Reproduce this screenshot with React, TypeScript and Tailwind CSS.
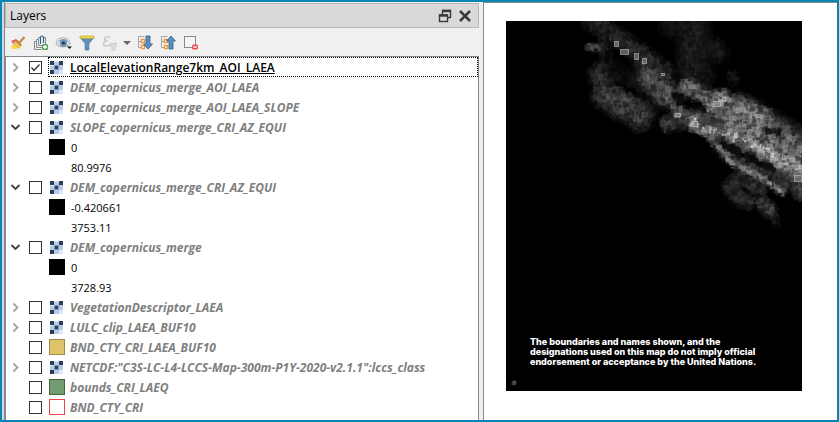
import { useState, type ReactNode } from "react";

type Layer = {
  name: string;
  kind: "raster" | "yellow" | "green" | "outline";
  branch?: "open" | "closed";
  active?: boolean;
  legend?: [string, string];
};

const layers: Layer[] = [
  { name: "LocalElevationRange7km_AOI_LAEA", kind: "raster", branch: "closed", active: true },
  { name: "DEM_copernicus_merge_AOI_LAEA", kind: "raster", branch: "closed" },
  { name: "DEM_copernicus_merge_AOI_LAEA_SLOPE", kind: "raster", branch: "closed" },
  { name: "SLOPE_copernicus_merge_CRI_AZ_EQUI", kind: "raster", branch: "open", legend: ["0", "80.9976"] },
  { name: "DEM_copernicus_merge_CRI_AZ_EQUI", kind: "raster", branch: "open", legend: ["-0.420661", "3753.11"] },
  { name: "DEM_copernicus_merge", kind: "raster", branch: "open", legend: ["0", "3728.93"] },
  { name: "VegetationDescriptor_LAEA", kind: "raster", branch: "closed" },
  { name: "LULC_clip_LAEA_BUF10", kind: "raster", branch: "closed" },
  { name: "BND_CTY_CRI_LAEA_BUF10", kind: "yellow" },
  { name: 'NETCDF:"C3S-LC-L4-LCCS-Map-300m-P1Y-2020-v2.1.1":lccs_class', kind: "raster", branch: "closed" },
  { name: "bounds_CRI_LAEQ", kind: "green" },
  { name: "BND_CTY_CRI", kind: "outline" },
];

/* ---------- toolbar icons ---------- */

function BrushIcon() {
  return (
    <svg width="16" height="16" viewBox="0 0 16 16">
      <path d="M1 6l5-2 3 3-4 3z" fill="#f0584a" />
      <path d="M2 8l4-2 4 4-4 2z" fill="#6aa2dc" />
      <path d="M1 11l5-2 3 3-3 2-4 0z" fill="#f7d64a" />
      <path d="M6 6l5 5-2 3-6-5z" fill="#f4c04c" />
      <path d="M7 5l5 5-1.500 1L6 6z" fill="#b5722c" />
      <path d="M9.500 7.500L14.500 2" stroke="#c98a45" strokeWidth="2.200" />
    </svg>
  );
}

function AddGroupIcon() {
  return (
    <svg width="16" height="16" viewBox="0 0 16 16" fill="none">
      <path d="M3.500 6.500h-2v8h7M5.500 4.500h-2v8h6M7 2.500H5.500v8h7v-8H11" stroke="#858b90" />
      <path d="M7.500 9V2.500a1.500 1.500 0 0 1 3 0V8" stroke="#33658f" strokeWidth="1.200" />
      <rect x="9" y="9" width="6" height="6" rx="1.500" fill="#5e9c62" />
      <path d="M12 10v4M10 12h4" stroke="#fff" strokeWidth="1.300" />
    </svg>
  );
}

function EyeIcon() {
  return (
    <svg width="18" height="16" viewBox="0 0 18 16">
      <path d="M1 8.500C4 3.500 12 3 15.500 8.500 12 13 4 13 1 8.500z" fill="#e4e8ec" stroke="#9ba1a6" />
      <path d="M1 6C4 1.800 11.500 1.500 15 6" fill="none" stroke="#b1b5b8" />
      <circle cx="8.500" cy="8" r="3.800" fill="#6d94bf" />
      <circle cx="8.500" cy="8" r="1.600" fill="#24364d" />
      <path d="M12 11.500h5L14.500 14z" fill="#111" />
    </svg>
  );
}

function FilterIcon() {
  return (
    <svg width="16" height="16" viewBox="0 0 16 16">
      <path d="M1 2.500h14L9.800 8.500V15H6.200V8.500z" fill="#6391be" stroke="#48749f" strokeWidth=".8" />
      <rect x="1" y="1" width="14" height="2.500" rx=".8" fill="#f5dc4b" stroke="#b69b2f" strokeWidth=".6" />
    </svg>
  );
}

function ExpressionFilterIcon() {
  return (
    <svg width="16" height="16" viewBox="0 0 16 16" fill="none">
      <path d="M8 2.500C5 .8 2 2 2.500 4.200c.2 1.300 1.500 1.700 3 1.700C3 6 1.200 7 1.500 9c.4 2.200 4 2.700 6.500 1" stroke="#c5c5c5" strokeWidth="1.400" />
      <path d="M8 8.500h6.500v2L13 12v3h-3v-3l-2-1.500z" fill="#dedede" stroke="#c9c9c9" />
    </svg>
  );
}

function TreeArrowIcon({ up = false }: { up?: boolean }) {
  return (
    <svg width="16" height="16" viewBox="0 0 16 16" fill="none">
      <path d="M1.500 1v11.500h3M1.500 6.500h3M1.500 1.500h6" stroke="#a5a5a5" />
      <rect x="4.500" y="4.500" width="3" height="3" fill="#fff" stroke="#ee9838" strokeWidth="1.400" />
      <rect x="4.500" y="10.500" width="3" height="3" fill="#fff" stroke="#ee9838" strokeWidth="1.400" />
      {up ? (
        <path d="M11 1L15.500 6H13v8H9V6H6.500z" fill="#5c8fc1" stroke="#315f8d" strokeWidth=".8" />
      ) : (
        <path d="M11 14L6.500 9H9V1h4v8h2.500z" fill="#5c8fc1" stroke="#315f8d" strokeWidth=".8" />
      )}
    </svg>
  );
}

function RemoveIcon() {
  return (
    <svg width="16" height="16" viewBox="0 0 16 16" fill="none">
      <rect x="1.500" y="1.500" width="11" height="11" stroke="#85898c" fill="#f4f4f4" />
      <rect x="9" y="9.500" width="6" height="5" rx="1.500" fill="#e84e56" />
      <path d="M10 12h4" stroke="#fff" strokeWidth="1.200" />
    </svg>
  );
}

function ToolButton({ label, disabled, children }: { label: string; disabled?: boolean; children: ReactNode }) {
  return (
    <button type="button" aria-label={label} title={label} disabled={disabled} className="flex h-6 w-[23px] items-center justify-center">
      {children}
    </button>
  );
}

/* ---------- layer tree ---------- */

function RasterIcon() {
  return (
    <svg width="13" height="13" viewBox="0 0 13 13" shapeRendering="crispEdges">
      <path d="M4 0h5v4H4zM0 4h4v5H0zM9 4h4v5H9zM4 9h5v4H4z" fill="#b4c9e5" />
      <path d="M4 4h5v5H4z" fill="#7f9cc2" />
      <path d="M4 0h5v1H4zM0 4h4v1H0zM9 9h4v4H9z" fill="#dfe8f4" />
      <path d="M0 0h4v4H0zM9 0h4v4H9zM0 9h4v4H0zM5 5h3v3H5z" fill="#2d3f55" />
    </svg>
  );
}

function LayerSymbol({ kind }: { kind: Layer["kind"] }) {
  if (kind === "raster") return <RasterIcon />;
  if (kind === "yellow") return <span className="size-4 border border-[#a08b43] bg-[#dfc46b]" />;
  if (kind === "green") return <span className="size-4 border border-[#44633f] bg-[#729b6f]" />;
  return <span className="size-4 border border-[#e8474a] bg-white" />;
}

function BranchToggle({ open, name, onToggle }: { open: boolean; name: string; onToggle: () => void }) {
  return (
    <button type="button" aria-expanded={open} aria-label={`Toggle ${name}`} onClick={onToggle} className="flex h-5 w-[19px] items-center justify-center">
      <svg width="11" height="11" viewBox="0 0 11 11" fill="none">
        {open ? (
          <path d="M1.500 3l4 4 4-4" stroke="#404040" strokeWidth="1.800" />
        ) : (
          <path d="M3.500 1.500l4 4-4 4" stroke="#a3a3a3" strokeWidth="1.800" />
        )}
      </svg>
    </button>
  );
}

function LayerRow({ layer, index }: { layer: Layer; index: number }) {
  const [open, setOpen] = useState(layer.branch === "open");
  const id = `layer-${index}`;
  return (
    <li>
      <div className="flex h-5 items-center">
        <div className="w-[23px] shrink-0">
          {layer.branch && <BranchToggle open={open} name={layer.name} onToggle={() => setOpen(!open)} />}
        </div>
        <span className="grid w-[19px] shrink-0">
          <input id={id} type="checkbox" defaultChecked={layer.active} className="peer col-start-1 row-start-1 size-[13px] appearance-none border border-[#333] bg-white" />
          <svg className="pointer-events-none col-start-1 row-start-1 hidden peer-checked:block" width="13" height="13" viewBox="0 0 13 13" fill="none">
            <path d="M2.500 6.500l2.500 3 5.500-6" stroke="#333" strokeWidth="1.300" />
          </svg>
        </span>
        <label
          htmlFor={id}
          className={
            layer.active
              ? "flex h-5 flex-1 items-center border border-dotted border-black font-semibold text-black underline"
              : "flex h-5 flex-1 items-center border border-transparent font-bold text-[#808080] italic"
          }
        >
          <span className={layer.kind === "raster" ? "flex w-[21px] shrink-0 pl-px" : "flex w-[21px] shrink-0"}>
            <LayerSymbol kind={layer.kind} />
          </span>
          <span className="pt-px whitespace-nowrap">{layer.name}</span>
        </label>
      </div>
      {open && layer.legend && (
        <ul className="pl-[43px] text-[11px] text-black">
          {layer.legend.map((value, i) => (
            <li key={value} className="flex h-5 items-center gap-[6px]">
              <span className={i === 0 ? "size-4 bg-black" : "size-4"} />
              <span className="pt-px">{value}</span>
            </li>
          ))}
        </ul>
      )}
    </li>
  );
}

/* ---------- elevation raster ---------- */

// Ridges of terrain: x1, y1, x2, y2, radius, brightness
const ridges = [
  [187, 5, 190, 54, 17, 0.16],
  [165, 5, 185, 10, 12, 0.1],
  [207, 27, 212, 32, 10, 0.14],
  [226, 54, 228, 60, 4, 0.16],
  [86, 1, 110, 15, 9, 0.2],
  [110, 15, 158, 50, 9, 0.24],
  [99, 10, 100, 55, 6, 0.15],
  [82, 26, 95, 27, 3, 0.36],
  [105, 50, 140, 68, 10, 0.1],
  [94, 54, 101, 74, 11, 0.24],
  [101, 74, 134, 94, 14, 0.36],
  [131, 104, 131, 108, 4, 0.2],
  [134, 42, 160, 58, 7, 0.28],
  [144, 57, 161, 74, 13, 0.46],
  [161, 74, 176, 91, 7, 0.45],
  [176, 91, 189, 102, 6, 0.4],
  [181, 66, 197, 74, 9, 0.58],
  [205, 84, 216, 78, 9, 0.75],
  [216, 80, 232, 82, 9, 0.4],
  [195, 96, 232, 90, 13, 0.38],
  [171, 94, 173, 95, 5, 0.65],
  [162, 103, 174, 100, 8, 0.34],
  [228, 100, 294, 138, 25, 0.58],
  [234, 87, 258, 98, 11, 0.66],
  [270, 108, 294, 130, 12, 0.44],
  [189, 98, 189, 105, 6, 0.85],
  [189, 106, 204, 112, 5, 0.78],
  [204, 111, 227, 114, 6, 0.74],
  [227, 114, 254, 127, 6, 0.88],
  [254, 127, 276, 140, 6, 0.9],
  [276, 140, 295, 150, 10, 0.8],
  [205, 117, 224, 140, 4, 0.52],
  [224, 140, 252, 155, 4, 0.64],
  [252, 155, 276, 170, 4, 0.64],
  [220, 128, 282, 160, 9, 0.28],
  [286, 155, 296, 170, 9, 0.33],
  [225, 166, 233, 160, 8, 0.26],
  [243, 162, 255, 168, 7, 0.24],
  [232, 176, 242, 180, 8, 0.26],
  [257, 183, 263, 189, 7, 0.34],
  [267, 191, 270, 203, 3, 0.18],
];

// Valleys that cut through the ridges: x1, y1, x2, y2, radius
const valleys = [
  [216, 121, 236, 134, 4],
  [236, 134, 266, 148, 4],
  [262, 110, 272, 111, 3],
  [101, 5, 102, 46, 1],
  [170, 77, 198, 88, 4],
  [110, 62, 130, 72, 3],
];

// Steep cells: x, y, width, height
const peaks = [
  [108, 20, 5, 6],
  [114, 28, 9, 6],
  [128, 32, 5, 7],
  [136, 37, 5, 6],
  [155, 52, 4, 3],
  [207, 80, 8, 6],
  [216, 76, 4, 4],
  [187, 100, 5, 6],
  [169, 92, 6, 4],
  [288, 154, 8, 7],
];

function distance(px: number, py: number, x1: number, y1: number, x2: number, y2: number) {
  const dx = x2 - x1;
  const dy = y2 - y1;
  const t = Math.max(0, Math.min(1, ((px - x1) * dx + (py - y1) * dy) / (dx * dx + dy * dy)));
  return Math.hypot(px - x1 - t * dx, py - y1 - t * dy);
}

function buildCells() {
  let seed = 71;
  const random = () => {
    seed = (seed * 16807) % 2147483647;
    return seed / 2147483647;
  };
  const cells: { x: number; y: number; w: number; h: number; fill: string; edge: string; order: number }[] = [];
  for (let y = 0; y < 212; y += 2) {
    for (let x = 74; x < 296; x += 2) {
      const jitter = random();
      const px = x + random() * 2;
      const py = y + random() * 2;
      let v = 0;
      for (const [x1, y1, x2, y2, r, b] of ridges) {
        const d = distance(px, py, x1, y1, x2, y2) / (r * 1.25);
        if (d < 1) v = Math.max(v, b * (1 - d ** 2.2));
      }
      for (const [x1, y1, x2, y2, r] of valleys) {
        if (distance(px, py, x1, y1, x2, y2) < r) v *= 0.3;
      }
      const order = random();
      if (v < 0.03) continue;
      const level = Math.round(v * (0.3 + jitter * 0.7) * 235);
      const edge = Math.round(level * 1.4);
      cells.push({
        x: Math.round(px),
        y: Math.round(py),
        w: 2 + Math.round(random() * 3),
        h: 2 + Math.round(random() * 3),
        fill: `rgb(${level},${level},${level})`,
        edge: `rgb(${edge},${edge},${edge})`,
        order,
      });
    }
  }
  return cells.sort((a, b) => a.order - b.order);
}

const cells = buildCells();

function ElevationMap() {
  return (
    <svg viewBox="0 0 296 370" className="block w-full bg-black" role="img" aria-label="Local elevation range">
      {cells.map((c, i) => (
        <rect key={i} x={c.x - 2} y={c.y - 2} width={c.w} height={c.h} fill={c.fill} stroke={c.edge} strokeWidth="0.500" opacity="0.800" />
      ))}
      {peaks.map(([x, y, w, h]) => (
        <rect key={`${x}-${y}`} x={x + 0.5} y={y + 0.5} width={w - 1} height={h - 1} fill="#808080" stroke="#b8b8b8" strokeWidth="1" opacity="0.700" />
      ))}
      <circle cx="8" cy="362" r="2.500" fill="#3d3d3d" />
      <circle cx="9" cy="361" r="1" fill="#666" />
    </svg>
  );
}

export default function App() {
  return (
    <main className="grid h-screen grid-cols-[481fr_354fr] grid-rows-1 overflow-hidden border-2 border-[#0785b5] bg-[#f0f0f0] font-['Open_Sans','Noto_Sans',sans-serif] text-[12px] leading-5">
      <section className="flex min-h-0 min-w-0 border-l-2 border-[#d2d6d9] pr-1" aria-label="Layers">
        <div className="flex min-w-0 flex-1 flex-col border-l border-[#858a90] pt-px">
          <header className="flex h-[25px] shrink-0 items-center border border-[#b8b8b8] bg-[#d9d9d9] pr-[3px] pl-1">
            <h1 className="flex-1 pt-px text-[12px] text-black">Layers</h1>
            <button type="button" aria-label="Float panel" className="flex size-5 items-center justify-center">
              <svg width="14" height="14" viewBox="0 0 14 14" fill="none">
                <path d="M4.500 5V1.500h8v7H10" stroke="#3a3a3a" strokeWidth="1.400" />
                <path d="M4 2h9" stroke="#3a3a3a" strokeWidth="2.400" />
                <rect x="1.500" y="6" width="8" height="6.500" stroke="#3a3a3a" strokeWidth="1.400" fill="#d9d9d9" />
                <path d="M1 6.500h9" stroke="#3a3a3a" strokeWidth="2.400" />
              </svg>
            </button>
            <button type="button" aria-label="Close panel" className="flex size-5 items-center justify-center">
              <svg width="14" height="14" viewBox="0 0 14 14">
                <path d="M2 2l10 10M12 2L2 12" stroke="#3a3a3a" strokeWidth="2.600" />
              </svg>
            </button>
          </header>
          <div className="flex h-7 shrink-0 items-center pt-px pl-px" role="toolbar" aria-label="Layer tools">
            <ToolButton label="Open layer styling"><BrushIcon /></ToolButton>
            <ToolButton label="Add group"><AddGroupIcon /></ToolButton>
            <ToolButton label="Manage map themes"><EyeIcon /></ToolButton>
            <ToolButton label="Filter legend"><FilterIcon /></ToolButton>
            <ToolButton label="Filter by expression" disabled><ExpressionFilterIcon /></ToolButton>
            <button type="button" aria-label="Filter options" className="flex h-6 w-3 items-center justify-center">
              <svg width="8" height="4" viewBox="0 0 8 4"><path d="M0 0h8L4 4z" fill="#666" /></svg>
            </button>
            <ToolButton label="Expand all"><TreeArrowIcon /></ToolButton>
            <ToolButton label="Collapse all"><TreeArrowIcon up /></ToolButton>
            <ToolButton label="Remove layer"><RemoveIcon /></ToolButton>
          </div>
          <ul className="min-h-0 flex-1 overflow-hidden border border-b-0 border-[#82878f] bg-white">
            {layers.map((layer, i) => (
              <LayerRow key={layer.name} layer={layer} index={i} />
            ))}
          </ul>
        </div>
      </section>
      <section className="min-w-0 border-t border-l border-[#858a90] bg-white pt-[18px] pr-[35px] pl-[22px]" aria-label="Map">
        <div className="relative">
          <ElevationMap />
          <p className="absolute right-3 bottom-6 left-6 font-['Inter',sans-serif] text-[9px] leading-[10px] font-extrabold whitespace-nowrap text-white">
            The boundaries and names shown, and the
            <br />
            designations used on this map do not imply official
            <br />
            endorsement or acceptance by the United Nations.
          </p>
        </div>
      </section>
    </main>
  );
}
